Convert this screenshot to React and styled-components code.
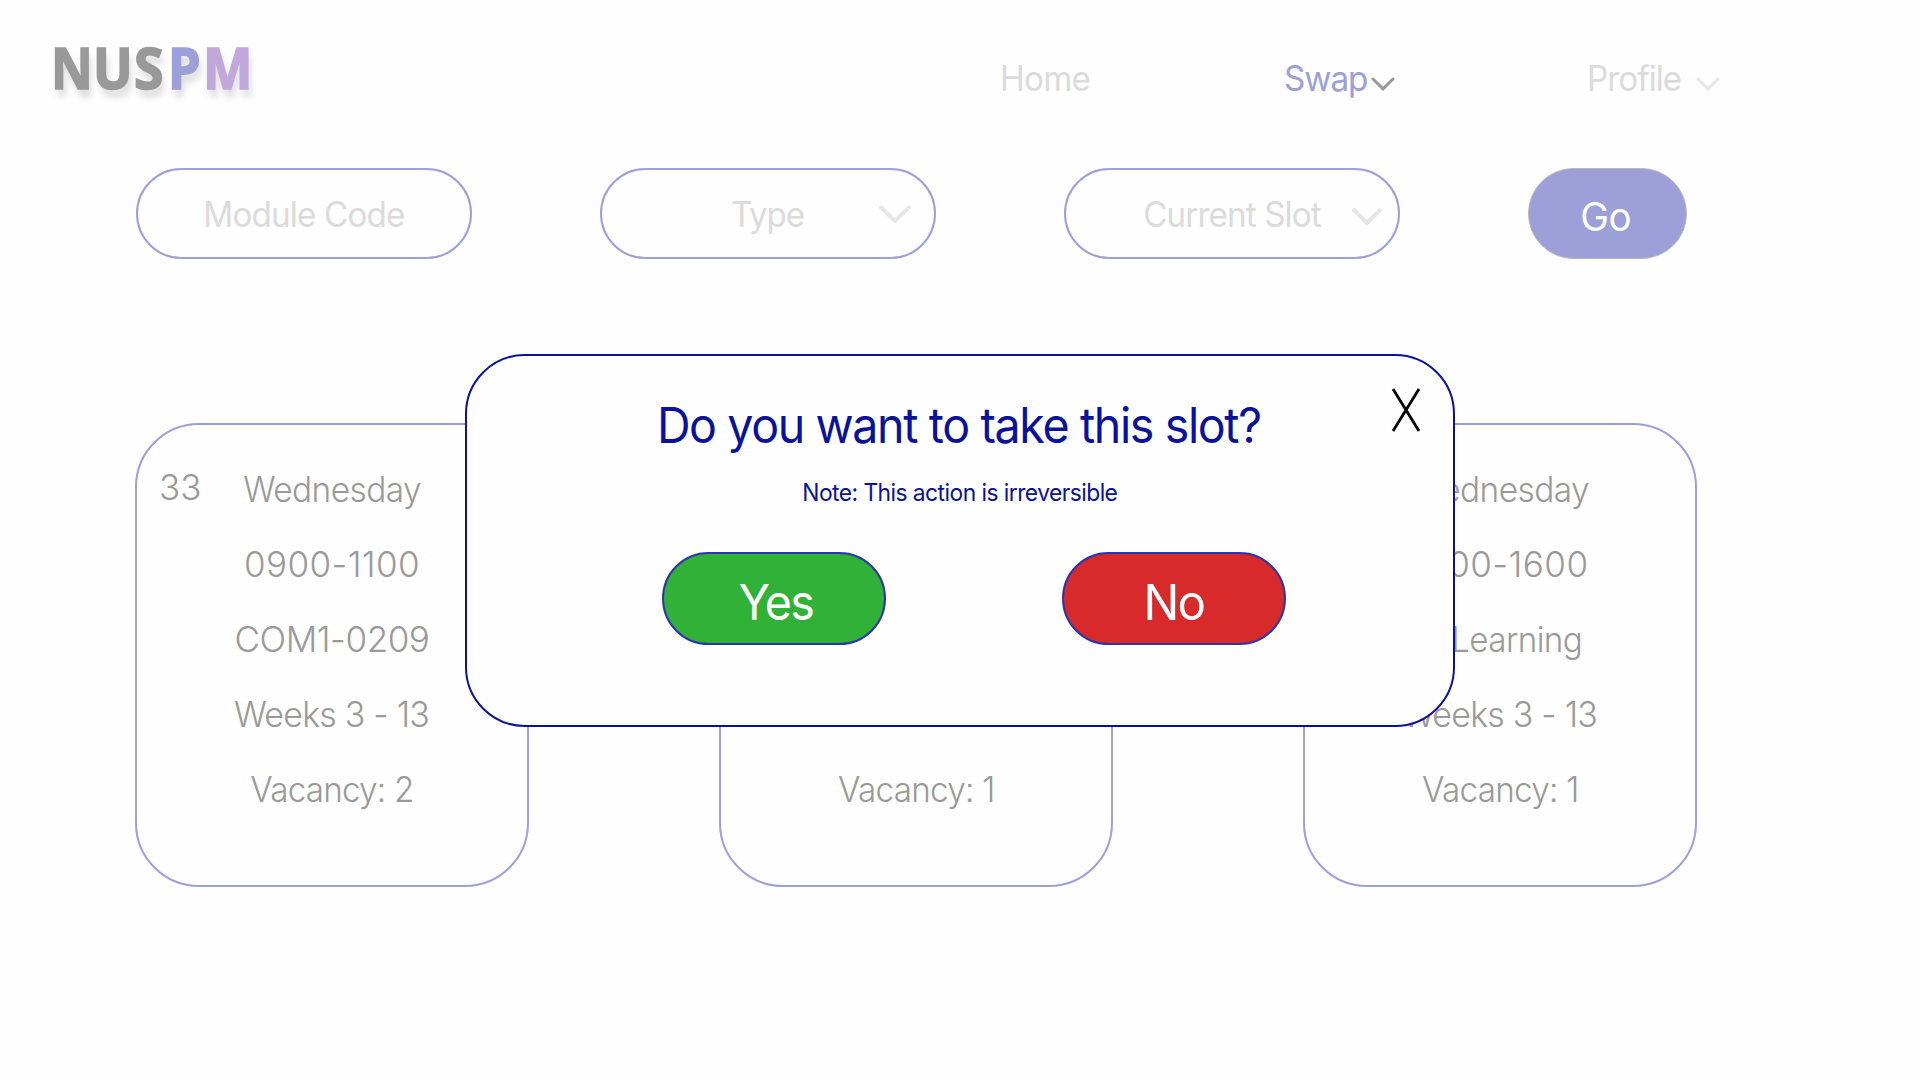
import React from "react";
import styled, { createGlobalStyle } from "styled-components";

const GlobalStyle = createGlobalStyle`
  *, *::before, *::after { box-sizing: border-box; }
  body { margin: 0; background: #fefefe; }
  button { margin: 0; padding: 0; font: inherit; cursor: pointer; }
`;

const navy = "#0a129b";
const faded = "#9da0d8";

const Page = styled.div`
  position: relative;
  width: 1920px;
  height: 1080px;
  overflow: hidden;
  background: #fefefe;
  font-family: Inter, "Liberation Sans", sans-serif;
  font-weight: 400;
`;

const Text = styled.span`
  width: ${(p) => (p.$w ? `${p.$w}px` : "auto")};
  font-size: ${(p) => p.$size || 35}px;
  letter-spacing: ${(p) => p.$ls || 0}px;
  font-weight: ${(p) => p.$weight || 400};
  line-height: 1;
  white-space: nowrap;
  transform-origin: ${(p) => (p.$w ? "left" : "center")};
  transform: translate(${(p) => p.$x || 0}px, ${(p) => p.$y || 0}px) scaleX(${(p) => p.$sx || 0.95});
`;

const Header = styled.header`
  display: grid;
  grid-template-columns: 949px 284px 303px auto;
  height: 168px;
  padding-left: 51px;
`;

const Logo = styled.div`
  display: flex;
  padding-top: 35px;
  font-family: "Open Sans", sans-serif;
  font-weight: 700;
  font-size: 57px;
  line-height: 64px;
  text-shadow: 3px 8px 8px rgba(0, 0, 0, 0.14);
`;

const Letter = styled.span`
  width: ${(p) => p.$w}px;
  color: ${(p) => p.$color};
  -webkit-text-stroke: 1.7px ${(p) => p.$color};
  transform-origin: left;
  transform: scaleX(${(p) => p.$sx});
`;

const NavItem = styled.a`
  display: flex;
  align-items: center;
  height: 36px;
  margin-top: 60px;
  color: ${(p) => (p.$active ? faded : "#dbdbdb")};
`;

const NavIcon = styled.svg`
  margin-top: 12px;
`;

const Filters = styled.form`
  display: flex;
  gap: 128px;
  padding-left: 136px;
`;

const Field = styled.div`
  display: grid;
  align-items: center;
  justify-items: center;
  width: 336px;
  height: 91px;
  border: 2px solid ${faded};
  border-radius: 46px;
  color: #dbdbdb;
  & > * { grid-area: 1 / 1; }
`;

const FieldIcon = styled.svg`
  justify-self: end;
  margin-right: ${(p) => p.$right}px;
  transform: translateY(${(p) => p.$y}px);
`;

const GoButton = styled.button`
  display: flex;
  align-items: center;
  justify-content: center;
  width: 159px;
  height: 91px;
  border: 1px solid #b8b8bc;
  border-radius: 46px;
  background: ${faded};
  color: #fff;
`;

const Cards = styled.main`
  display: flex;
  gap: 190px;
  padding: 164px 0 0 135px;
`;

const Card = styled.article`
  display: grid;
  align-items: start;
  width: 394px;
  height: 464px;
  padding-top: 27px;
  border: 2px solid ${faded};
  border-radius: 64px;
  color: #999;
  & > * { grid-area: 1 / 1; }
`;

const Lines = styled.div`
  display: flex;
  flex-direction: column;
  justify-content: flex-end;
  align-items: center;
  height: 375px;
`;

const Line = styled.div`
  display: flex;
  align-items: center;
  height: 75px;
`;

const SlotNumber = styled.div`
  display: flex;
  align-items: center;
  height: 70px;
  padding-left: 22px;
`;

const Dialog = styled.section`
  position: absolute;
  left: 465px;
  top: 354px;
  display: flex;
  flex-direction: column;
  align-items: center;
  width: 990px;
  height: 373px;
  padding-top: 40px;
  border: 2px solid ${navy};
  border-radius: 60px;
  background: #fefefe;
  color: ${navy};
`;

const Title = styled.h1`
  display: flex;
  align-items: center;
  height: 58px;
  margin: 0;
`;

const Note = styled.p`
  display: flex;
  align-items: center;
  height: 30px;
  margin: 24px 0 44px;
`;

const Actions = styled.div`
  display: flex;
  gap: 176px;
  margin-left: 28px;
`;

const Choice = styled.button`
  display: flex;
  align-items: center;
  justify-content: center;
  width: 224px;
  height: 93px;
  border: 2px solid #2c36aa;
  border-radius: 47px;
  background: ${(p) => p.$bg};
  color: #fff;
`;

const Close = styled.button`
  position: absolute;
  right: 31px;
  top: 31px;
  display: flex;
  border: 0;
  background: none;
`;

function Chevron({ color }) {
  return (
    <NavIcon width="24" height="16" viewBox="0 0 24 16" fill="none">
      <path d="M2 3 L12 12.8 L22 3" stroke={color} strokeWidth="3" strokeLinecap="round" />
    </NavIcon>
  );
}

const cards = [
  {
    number: "33",
    lines: [["Wednesday", -0.6, 0.955], ["0900-1100", 0.4, 1], ["COM1-0209", -0.45, 1], ["Weeks 3 - 13", -0.8, 0.97], ["Vacancy: 2", -0.85]],
  },
  {
    lines: [["Vacancy: 1", -0.8]],
  },
  {
    lines: [["Wednesday", -0.6, 0.955], ["1400-1600", 0.45, 1], ["E-Learning", -0.6], ["Weeks 3 - 13", -0.8, 0.97], ["Vacancy: 1", -0.8]],
  },
];

export default function App() {
  return (
    <Page>
      <GlobalStyle />
      <Header>
        <Logo>
          <Letter $w={42} $sx={0.9} $color="#999">N</Letter>
          <Letter $w={41} $sx={0.92} $color="#999">U</Letter>
          <Letter $w={34} $sx={0.94} $color="#999">S</Letter>
          <Letter $w={35} $sx={0.91} $color={faded}>P</Letter>
          <Letter $w={46} $sx={0.92} $color="#c0a8dc">M</Letter>
        </Logo>
        <NavItem><Text $w={90} $ls={-0.8}>Home</Text></NavItem>
        <NavItem $active>
          <Text $w={87} $ls={-1.1}>Swap</Text>
          <Chevron color="#999" />
        </NavItem>
        <NavItem>
          <Text $w={109} $ls={-1}>Profile</Text>
          <Chevron color="#e6e6e6" />
        </NavItem>
      </Header>
      <Filters>
        <Field><Text $y={0.5} $ls={-0.9}>Module Code</Text></Field>
        <Field>
          <Text $x={-1} $y={0.5} $ls={-1.3}>Type</Text>
          <FieldIcon $right={22} $y={0.5} width="34" height="22" viewBox="0 0 34 22" fill="none">
            <path d="M3 4 L17 17.5 L31 4" stroke="#e6e6e6" strokeWidth="4" strokeLinecap="round" />
          </FieldIcon>
        </Field>
        <Field>
          <Text $x={-0.5} $y={0.5} $ls={-0.95}>Current Slot</Text>
          <FieldIcon $right={14} $y={2.5} width="34" height="22" viewBox="0 0 34 22" fill="none">
            <path d="M3 3.5 L17 17.5 L31 3.5" stroke="#e6e6e6" strokeWidth="4" />
          </FieldIcon>
        </Field>
        <GoButton type="button"><Text $size={39} $x={-2} $y={2.5} $sx={0.99} $ls={-0.6}>Go</Text></GoButton>
      </Filters>
      <Cards>
        {cards.map((card, i) => (
          <Card key={i}>
            {card.number && <SlotNumber><Text $weight={350} $y={-0.5} $sx={1}>{card.number}</Text></SlotNumber>}
            <Lines>
              {card.lines.map(([text, ls, sx]) => (
                <Line key={text}><Text $weight={350} $y={-0.5} $ls={ls} $sx={sx}>{text}</Text></Line>
              ))}
            </Lines>
          </Card>
        ))}
      </Cards>
      <Dialog>
        <Title><Text $size={49} $x={-1} $y={-0.5} $ls={-1.45}>Do you want to take this slot?</Text></Title>
        <Note><Text $size={24} $ls={-0.57}>Note: This action is irreversible</Text></Note>
        <Actions>
          <Choice $bg="#32b138"><Text $size={49} $x={1.5} $y={3.5} $ls={-1.8}>Yes</Text></Choice>
          <Choice $bg="#d82a2b"><Text $size={49} $x={-0.5} $y={3.5} $sx={0.97} $ls={-1.7}>No</Text></Choice>
        </Actions>
        <Close aria-label="Close">
          <svg width="32" height="46" viewBox="0 0 32 46" fill="none">
            <path d="M3 2 L29 44 M29 2 L3 44" stroke="#000" strokeWidth="2.8" />
          </svg>
        </Close>
      </Dialog>
    </Page>
  );
}
